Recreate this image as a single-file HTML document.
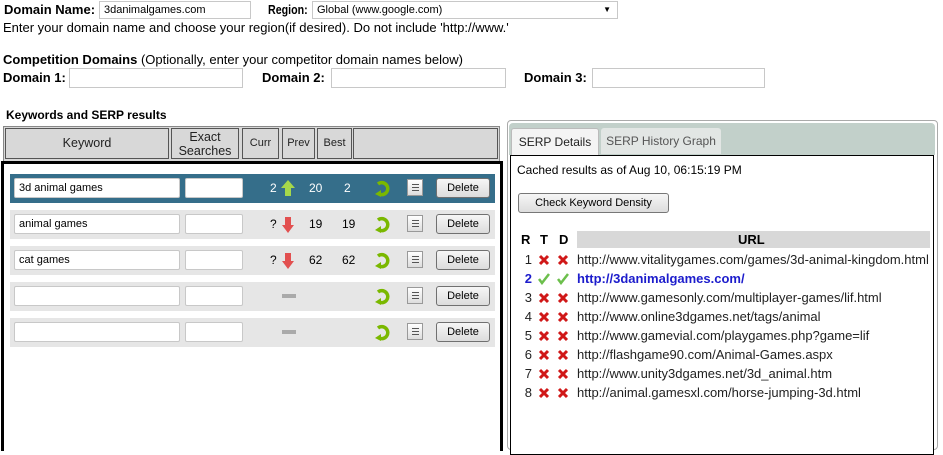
<!DOCTYPE html>
<html><head><style>
body{margin:0;width:943px;height:440px;overflow:hidden;background:#fff;font-family:"Liberation Sans",Arial,sans-serif;font-size:12px;color:#000;position:relative}
.a{position:absolute;white-space:nowrap}
.b{font-weight:bold}
.in{position:absolute;background:#fff;border:1px solid #c8c8c8;box-sizing:border-box;font-size:11px;padding:2px 4px;line-height:13px}
.row{position:absolute;left:10px;width:485px;height:29px;background:#e6e6e6}
.row.sel{background:#356e8a}
.kw{position:absolute;left:4px;top:4px;width:166px;height:20px;background:#fff;border:1px solid #c8c8c8;box-sizing:border-box;font-size:11px;padding:3px 4px;border-radius:2px}
.ex{position:absolute;left:175px;top:4px;width:58px;height:20px;background:#fff;border:1px solid #c8c8c8;box-sizing:border-box;border-radius:2px}
.del{position:absolute;left:426px;top:4px;width:52px;height:18px;border:1px solid #707070;border-radius:3px;background:linear-gradient(#f6f6f6,#dcdcdc);font-size:11px;text-align:center;line-height:18px}
.lst{position:absolute;left:397px;top:5px;width:16px;height:17px;border:1px solid #999;background:linear-gradient(#fff,#ddd);box-sizing:border-box}
.lst i{position:absolute;left:4px;width:7px;height:1px;background:#555}
.n{position:absolute;top:7px;font-size:12px}
.sel .n{color:#fff}
.th{position:absolute;top:128px;height:31px;background:#d8d8d8;border:1px solid #555;box-sizing:border-box;text-align:center;font-size:12px;color:#222}
.sr{position:absolute;left:517px;width:420px;height:19px;font-size:13px;line-height:19px;color:#222}
.sr .r{position:absolute;left:0;width:15px;text-align:right}
.sr svg{position:absolute;top:4px}
.sr .u{position:absolute;left:60px;white-space:nowrap}
</style></head><body>
<div class="a b" style="left:4px;top:2px;font-size:13px">Domain Name:</div>
<div class="in" style="left:99px;top:1px;width:152px;height:18px">3danimalgames.com</div>
<div class="in" style="left:312px;top:1px;width:306px;height:18px">Global (www.google.com)<span style="position:absolute;right:6px;top:1px;font-size:8px">▼</span></div>
<div class="a b" style="left:268px;top:2px;font-size:13px;transform:scaleX(0.82);transform-origin:0 0">Region:</div>
<div class="a" style="left:3px;top:20px;font-size:13px">Enter your domain name and choose your region(if desired). Do not include 'http://www.'</div>
<div class="a" style="left:3px;top:52px;font-size:13px"><b>Competition Domains</b> (Optionally, enter your competitor domain names below)</div>
<div class="a b" style="left:3px;top:70px;font-size:13px">Domain 1:</div>
<div class="in" style="left:69px;top:68px;width:174px;height:20px"></div>
<div class="a b" style="left:262px;top:70px;font-size:13px">Domain 2:</div>
<div class="in" style="left:331px;top:68px;width:175px;height:20px"></div>
<div class="a b" style="left:524px;top:70px;font-size:13px">Domain 3:</div>
<div class="in" style="left:592px;top:68px;width:173px;height:20px"></div>
<div class="a b" style="left:6px;top:108px;font-size:12px">Keywords and SERP results</div>
<div style="position:absolute;left:3px;top:126px;width:497px;height:36px;background:#d8d8d8;border:1px solid #888;box-sizing:border-box"></div>
<div class="th" style="left:5px;top:128px;width:164px;line-height:29px;font-size:12.5px">Keyword</div>
<div class="th" style="left:171px;width:68px;line-height:14px;padding-top:1px;font-size:12.5px">Exact<br>Searches</div>
<div class="th" style="left:242px;width:37px;line-height:29px;font-size:11px">Curr</div>
<div class="th" style="left:282px;width:33px;line-height:29px;font-size:11px">Prev</div>
<div class="th" style="left:317px;width:35px;line-height:29px;font-size:11px">Best</div>
<div class="th" style="left:353px;width:145px"></div>
<div style="position:absolute;left:1px;top:161px;width:502px;height:290px;border:3px solid #000;box-sizing:border-box;border-bottom:none"></div>

<div class="row sel" style="top:174px"><div class="kw">3d animal games</div><div class="ex"></div>
<span class="n" style="left:260px">2</span><svg class="a" style="left:271px;top:6px" width="14" height="16"><path d="M7 0L14 8H10V16H4V8H0Z" fill="#a6d84a"/></svg>
<span class="n" style="left:299px">20</span><span class="n" style="left:334px">2</span>
<svg class="a" style="left:364px;top:6px" width="16" height="17"><path d="M4 4A6 6 0 1 1 5 14" fill="none" stroke="#7ab800" stroke-width="3.5"/><path d="M1 14L7 10L7 17Z" fill="#7ab800"/></svg>
<div class="lst"><i style="top:4px"></i><i style="top:7px"></i><i style="top:10px"></i></div><div class="del">Delete</div></div>

<div class="row" style="top:210px"><div class="kw">animal games</div><div class="ex"></div>
<span class="n" style="left:260px">?</span><svg class="a" style="left:272px;top:7px" width="12" height="16"><path d="M3 0H9V8H12L6 16L0 8H3Z" fill="#e25050"/></svg>
<span class="n" style="left:299px">19</span><span class="n" style="left:332px">19</span>
<svg class="a" style="left:364px;top:6px" width="16" height="17"><path d="M4 4A6 6 0 1 1 5 14" fill="none" stroke="#7ab800" stroke-width="3.5"/><path d="M1 14L7 10L7 17Z" fill="#7ab800"/></svg>
<div class="lst"><i style="top:4px"></i><i style="top:7px"></i><i style="top:10px"></i></div><div class="del">Delete</div></div>

<div class="row" style="top:246px"><div class="kw">cat games</div><div class="ex"></div>
<span class="n" style="left:260px">?</span><svg class="a" style="left:272px;top:7px" width="12" height="16"><path d="M3 0H9V8H12L6 16L0 8H3Z" fill="#e25050"/></svg>
<span class="n" style="left:299px">62</span><span class="n" style="left:332px">62</span>
<svg class="a" style="left:364px;top:6px" width="16" height="17"><path d="M4 4A6 6 0 1 1 5 14" fill="none" stroke="#7ab800" stroke-width="3.5"/><path d="M1 14L7 10L7 17Z" fill="#7ab800"/></svg>
<div class="lst"><i style="top:4px"></i><i style="top:7px"></i><i style="top:10px"></i></div><div class="del">Delete</div></div>

<div class="row" style="top:282px"><div class="kw"></div><div class="ex"></div>
<div class="a" style="left:272px;top:12px;width:14px;height:4px;background:#aaa"></div>
<svg class="a" style="left:364px;top:6px" width="16" height="17"><path d="M4 4A6 6 0 1 1 5 14" fill="none" stroke="#7ab800" stroke-width="3.5"/><path d="M1 14L7 10L7 17Z" fill="#7ab800"/></svg>
<div class="lst"><i style="top:4px"></i><i style="top:7px"></i><i style="top:10px"></i></div><div class="del">Delete</div></div>

<div class="row" style="top:318px"><div class="kw"></div><div class="ex"></div>
<div class="a" style="left:272px;top:12px;width:14px;height:4px;background:#aaa"></div>
<svg class="a" style="left:364px;top:6px" width="16" height="17"><path d="M4 4A6 6 0 1 1 5 14" fill="none" stroke="#7ab800" stroke-width="3.5"/><path d="M1 14L7 10L7 17Z" fill="#7ab800"/></svg>
<div class="lst"><i style="top:4px"></i><i style="top:7px"></i><i style="top:10px"></i></div><div class="del">Delete</div></div>

<!-- right panel -->
<div style="position:absolute;left:507px;top:120px;width:431px;height:330px;border:1px solid #aaa;border-radius:4px;box-sizing:border-box"></div>
<div style="position:absolute;left:509px;top:123px;width:426px;height:32px;background:#c2d0ca;border-radius:4px 4px 0 0"></div>
<div class="a" style="left:511px;top:128px;width:86px;height:27px;background:#f4f4f4;border:1px solid #bbb;border-bottom:none;border-radius:3px 3px 0 0;line-height:26px;text-align:center;font-size:12px;color:#222">SERP Details</div>
<div class="a" style="left:601px;top:128px;width:120px;height:26px;background:#e2e6e4;border-radius:3px 3px 0 0;line-height:26px;text-align:center;font-size:12px;color:#555">SERP History Graph</div>
<div style="position:absolute;left:510px;top:155px;width:424px;height:300px;border:1px solid #000;box-sizing:border-box;background:#fff"></div>
<div class="a" style="left:517px;top:163px;font-size:12px">Cached results as of Aug 10, 06:15:19 PM</div>
<div class="a" style="left:518px;top:193px;width:149px;height:18px;border:1px solid #777;border-radius:3px;background:linear-gradient(#f6f6f6,#ddd);font-size:11px;text-align:center;line-height:18px">Check Keyword Density</div>
<div class="a" style="left:577px;top:231px;width:353px;height:17px;background:#d8d8d8"></div>
<div class="a b" style="left:521px;top:232px;font-size:13px">R</div>
<div class="a b" style="left:540px;top:232px;font-size:13px">T</div>
<div class="a b" style="left:559px;top:232px;font-size:13px">D</div>
<div class="a b" style="left:738px;top:232px;font-size:13px">URL</div>

<div class="sr" style="top:250px"><span class="r">1</span><svg style="left:21px" width="12" height="12"><path d="M2 2L10 10M10 2L2 10" stroke="#d01818" stroke-width="3"/></svg><svg style="left:40px" width="12" height="12"><path d="M2 2L10 10M10 2L2 10" stroke="#d01818" stroke-width="3"/></svg><span class="u">http://www.vitalitygames.com/games/3d-animal-kingdom.html</span></div>
<div class="sr" style="top:269px"><span class="r" style="color:#1c1ccc;font-weight:bold">2</span><svg style="left:21px" width="12" height="12"><path d="M1 6L4 10L11 1" fill="none" stroke="#6cbf4c" stroke-width="2.5"/></svg><svg style="left:40px" width="12" height="12"><path d="M1 6L4 10L11 1" fill="none" stroke="#6cbf4c" stroke-width="2.5"/></svg><span class="u" style="color:#1c1ccc;font-weight:bold">http://3danimalgames.com/</span></div>
<div class="sr" style="top:288px"><span class="r">3</span><svg style="left:21px" width="12" height="12"><path d="M2 2L10 10M10 2L2 10" stroke="#d01818" stroke-width="3"/></svg><svg style="left:40px" width="12" height="12"><path d="M2 2L10 10M10 2L2 10" stroke="#d01818" stroke-width="3"/></svg><span class="u">http://www.gamesonly.com/multiplayer-games/lif.html</span></div>
<div class="sr" style="top:307px"><span class="r">4</span><svg style="left:21px" width="12" height="12"><path d="M2 2L10 10M10 2L2 10" stroke="#d01818" stroke-width="3"/></svg><svg style="left:40px" width="12" height="12"><path d="M2 2L10 10M10 2L2 10" stroke="#d01818" stroke-width="3"/></svg><span class="u">http://www.online3dgames.net/tags/animal</span></div>
<div class="sr" style="top:326px"><span class="r">5</span><svg style="left:21px" width="12" height="12"><path d="M2 2L10 10M10 2L2 10" stroke="#d01818" stroke-width="3"/></svg><svg style="left:40px" width="12" height="12"><path d="M2 2L10 10M10 2L2 10" stroke="#d01818" stroke-width="3"/></svg><span class="u">http://www.gamevial.com/playgames.php?game=lif</span></div>
<div class="sr" style="top:345px"><span class="r">6</span><svg style="left:21px" width="12" height="12"><path d="M2 2L10 10M10 2L2 10" stroke="#d01818" stroke-width="3"/></svg><svg style="left:40px" width="12" height="12"><path d="M2 2L10 10M10 2L2 10" stroke="#d01818" stroke-width="3"/></svg><span class="u">http://flashgame90.com/Animal-Games.aspx</span></div>
<div class="sr" style="top:364px"><span class="r">7</span><svg style="left:21px" width="12" height="12"><path d="M2 2L10 10M10 2L2 10" stroke="#d01818" stroke-width="3"/></svg><svg style="left:40px" width="12" height="12"><path d="M2 2L10 10M10 2L2 10" stroke="#d01818" stroke-width="3"/></svg><span class="u">http://www.unity3dgames.net/3d_animal.htm</span></div>
<div class="sr" style="top:383px"><span class="r">8</span><svg style="left:21px" width="12" height="12"><path d="M2 2L10 10M10 2L2 10" stroke="#d01818" stroke-width="3"/></svg><svg style="left:40px" width="12" height="12"><path d="M2 2L10 10M10 2L2 10" stroke="#d01818" stroke-width="3"/></svg><span class="u">http://animal.gamesxl.com/horse-jumping-3d.html</span></div>
</body></html>
